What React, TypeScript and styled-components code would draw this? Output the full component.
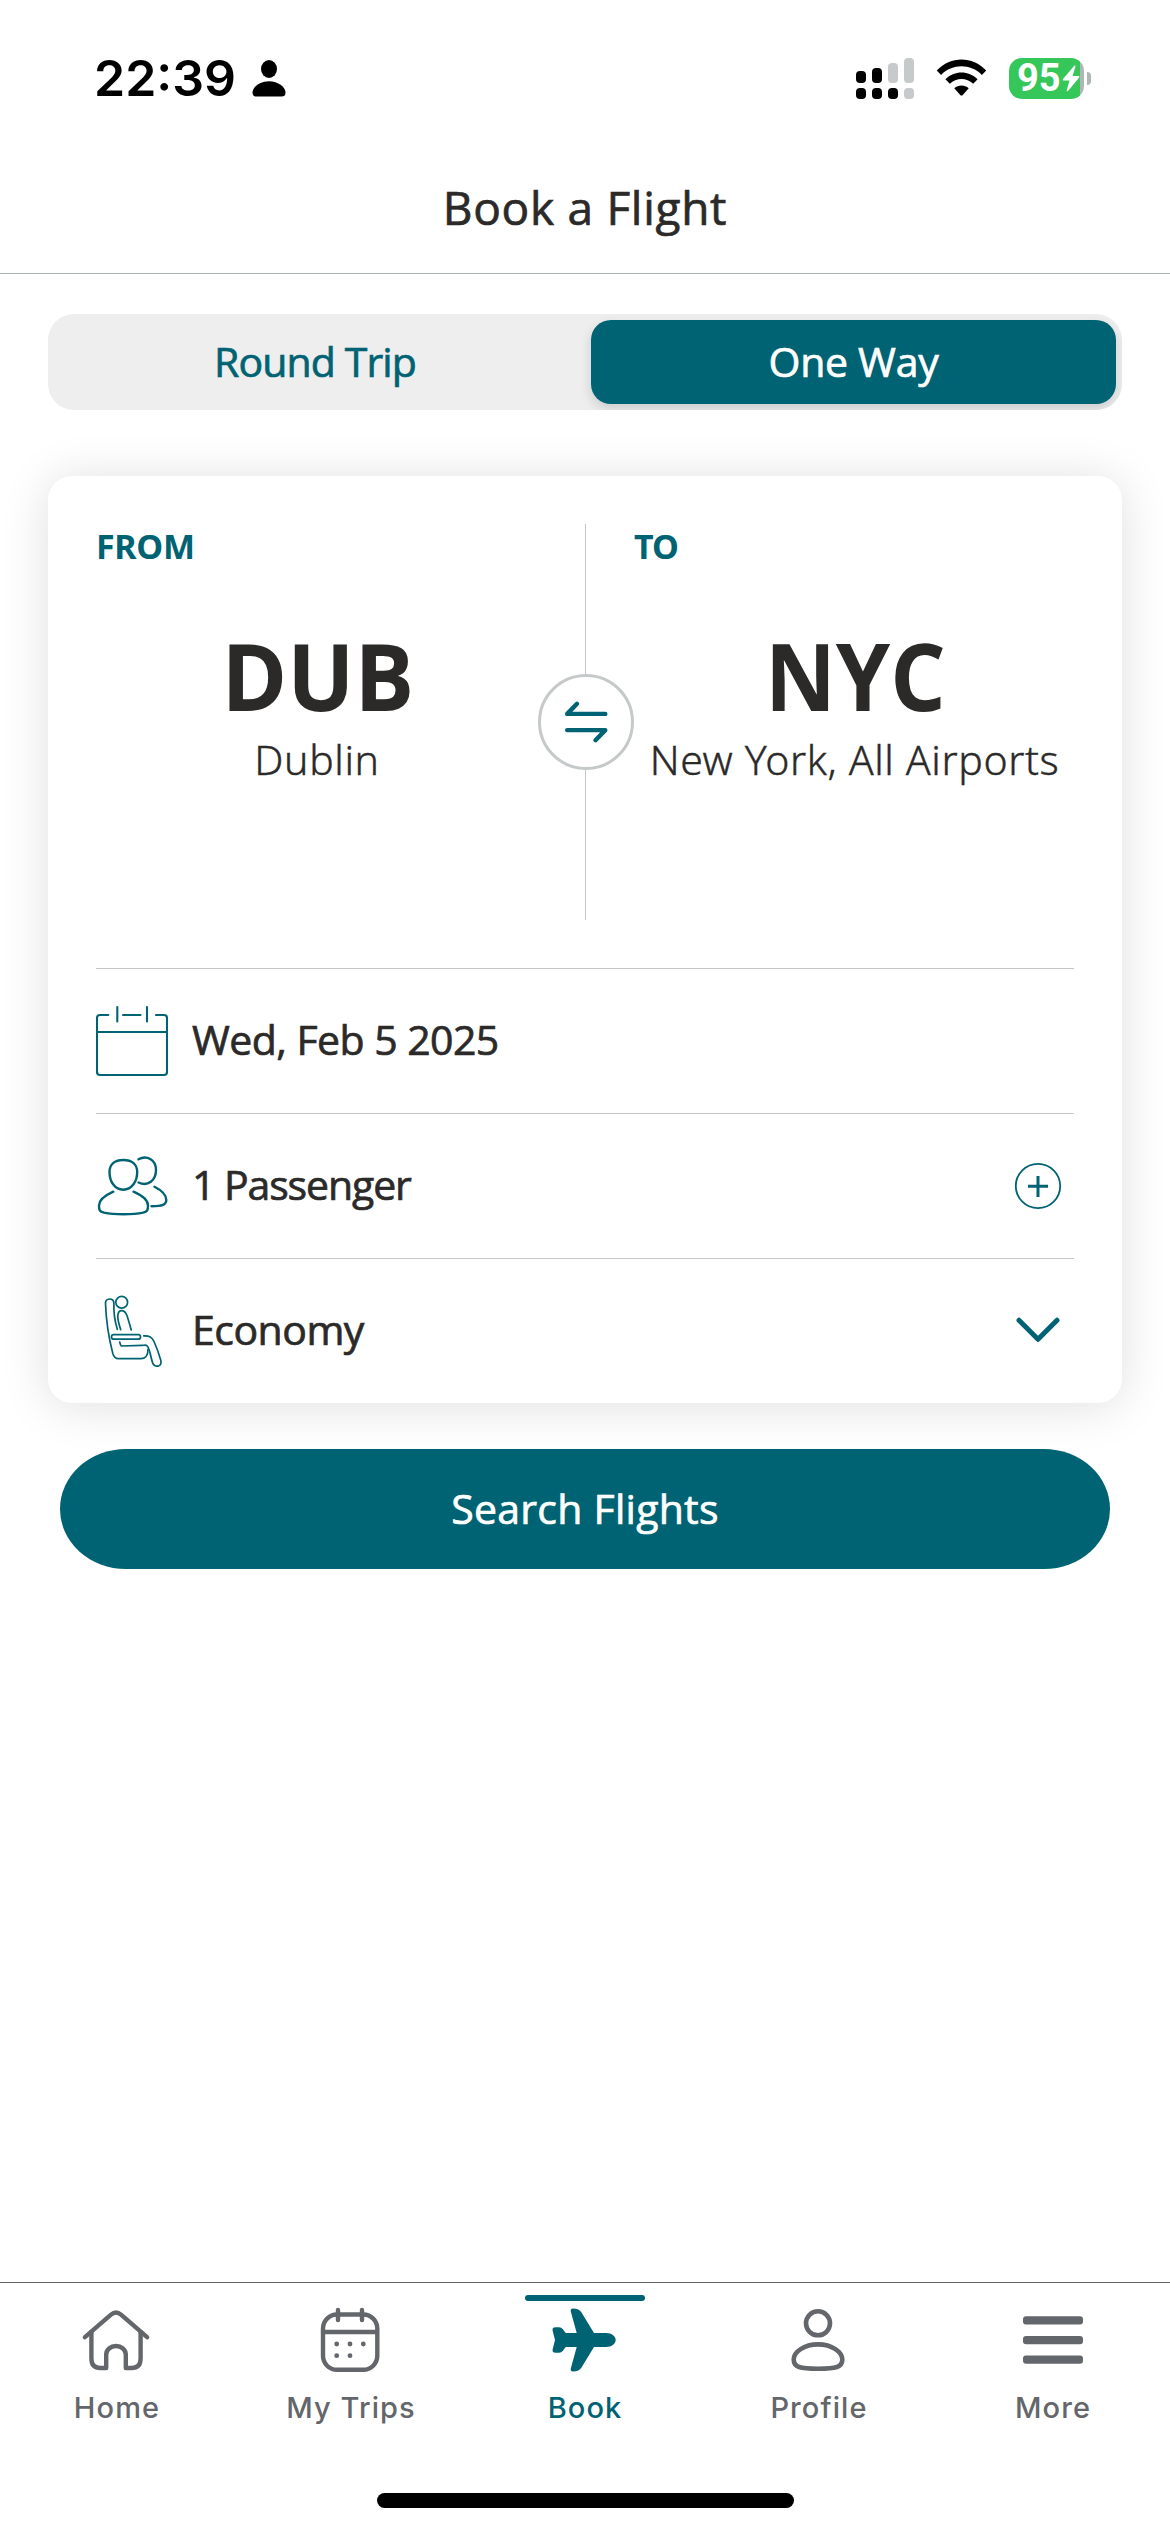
import React from 'react';
import styled, { createGlobalStyle } from 'styled-components';

const teal = '#006373';
const ink = '#2b2a29';
const grey = '#63666a';
const hairline = '#c4c7c8';

const GlobalStyle = createGlobalStyle`
  *, *::before, *::after { box-sizing: border-box; }
  body { margin: 0; background: #fff; }
  button { font: inherit; color: inherit; border: 0; background: none; padding: 0; margin: 0; }
`;

const Screen = styled.div`
  display: flex;
  flex-direction: column;
  width: 1170px;
  height: 2532px;
  background: #fff;
  color: ${ink};
  font-family: 'Open Sans', 'Noto Sans', sans-serif;
  font-weight: 500;
  white-space: nowrap;
  overflow: hidden;
`;

/* Status bar */
const StatusBar = styled.header`
  display: flex;
  justify-content: space-between;
  height: 141px;
  padding: 48px 79px 0 94px;
  font-family: Inter, 'Liberation Sans', sans-serif;
  color: #000;
`;

const StatusGroup = styled.div<{ $gap: number }>`
  display: flex;
  align-items: center;
  gap: ${({ $gap }) => $gap}px;
  height: 60px;
`;

const Clock = styled.time`
  font-size: 50px;
  font-weight: 560;
  line-height: 60px;
`;

const Battery = styled.div`
  display: flex;
  align-items: center;
  gap: 3px;
`;

const BatteryBody = styled.div`
  display: flex;
  align-items: center;
  gap: 1px;
  width: 75px;
  height: 41px;
  padding-left: 8px;
  border-radius: 13px;
  background: linear-gradient(to right, #35c759 71px, #afb6b6 71px);
  color: #fff;
`;

const BatteryLevel = styled.span`
  font-family: Roboto, 'Liberation Sans', sans-serif;
  font-size: 38px;
  font-weight: 700;
  line-height: 41px;
`;

const BatteryTip = styled.div`
  width: 4px;
  height: 13px;
  border-radius: 0 4px 4px 0;
  background: #afb6b6;
`;

/* Header */
const TitleBar = styled.div`
  display: flex;
  align-items: center;
  justify-content: center;
  height: 133px;
  border-bottom: 1px solid #a9b1b2;
`;

const Title = styled.h1`
  margin: 0;
  font-size: 46px;
  font-weight: 500;
  line-height: 60px;
  letter-spacing: 0.7px;
  -webkit-text-stroke: 0.7px currentColor;
`;

const Content = styled.main`
  flex: 1;
  display: flex;
  flex-direction: column;
  padding: 40px 48px 0;
`;

/* Trip type */
const Segmented = styled.div`
  display: grid;
  grid-template-columns: 537px 525px;
  gap: 6px;
  height: 96px;
  padding: 6px 6px 6px 0;
  border-radius: 26px;
  background: #eeeeee;
  overflow: hidden;
`;

const Segment = styled.button<{ $active?: boolean; $spacing: number }>`
  border-radius: 20px;
  background: ${({ $active }) => ($active ? teal : 'transparent')};
  color: ${({ $active }) => ($active ? '#fff' : teal)};
  box-shadow: ${({ $active }) => ($active ? '0 5px 12px rgba(0, 20, 24, 0.15)' : 'none')};
  font-size: 41px;
  line-height: 80px;
  padding: ${({ $active }) => ($active ? '0 0 2px' : '0 3px 2px 0')};
  letter-spacing: ${({ $spacing }) => $spacing}px;
  -webkit-text-stroke: 0.7px currentColor;
`;

/* Search card */
const Card = styled.section`
  display: flex;
  flex-direction: column;
  height: 927px;
  margin-top: 66px;
  border-radius: 24px;
  background: #fff;
  box-shadow: 0 3px 48px rgba(0, 0, 0, 0.13);
`;

const Route = styled.div`
  display: grid;
  grid-template-columns: 537px 1px 1fr;
  height: 492px;
`;

const Divider = styled.div`
  display: flex;
  align-items: center;
  justify-content: center;
  margin: 48px 0;
  background: ${hairline};
`;

const SwapButton = styled.button`
  flex: none;
  display: flex;
  align-items: center;
  justify-content: center;
  width: 96px;
  height: 96px;
  border: 3px solid #c6c9ca;
  border-radius: 50%;
  background: #fff;
`;

const Place = styled.div`
  display: flex;
  flex-direction: column;
  align-items: center;
  padding-top: 50px;
`;

const PlaceLabel = styled.span<{ $spacing: number }>`
  align-self: flex-start;
  padding-left: 48px;
  color: ${teal};
  font-family: 'Noto Sans', sans-serif;
  font-size: 34px;
  font-weight: 700;
  line-height: 41px;
  letter-spacing: ${({ $spacing }) => $spacing}px;
`;

const PlaceCode = styled.strong<{ $stretch: number }>`
  margin-top: 58px;
  padding-left: 2px;
  font-size: 94px;
  font-weight: 700;
  line-height: 100px;
  transform: scaleX(${({ $stretch }) => $stretch});
`;

const PlaceName = styled.span`
  margin-top: 9px;
  padding-left: 1px;
  font-family: 'Noto Sans', sans-serif;
  font-size: 41px;
  font-weight: 300;
  line-height: 50px;
  letter-spacing: 0.6px;
  -webkit-text-stroke: 0.4px currentColor;
`;

const Row = styled.div`
  display: flex;
  align-items: center;
  gap: 24px;
  height: 145px;
  margin: 0 48px;
  padding-right: 12px;
  border-top: 1px solid ${hairline};
`;

const RowText = styled.span<{ $spacing: number }>`
  flex: 1;
  padding-bottom: 4px;
  font-size: 41px;
  line-height: 50px;
  letter-spacing: ${({ $spacing }) => $spacing}px;
  -webkit-text-stroke: 0.7px currentColor;
`;

const SearchButton = styled.button`
  height: 120px;
  margin: 46px 12px 0;
  padding-bottom: 2px;
  border-radius: 66px / 60px;
  background: ${teal};
  color: #fff;
  font-size: 41px;
  letter-spacing: 0.25px;
  -webkit-text-stroke: 0.7px currentColor;
`;

/* Tab bar */
const TabBar = styled.footer`
  display: flex;
  flex-direction: column;
  align-items: center;
  height: 250px;
  border-top: 1px solid ${grey};
`;

const Tabs = styled.nav`
  display: grid;
  grid-template-columns: repeat(5, 234px);
`;

const Tab = styled.button<{ $active?: boolean }>`
  display: flex;
  flex-direction: column;
  align-items: center;
  padding-top: 12px;
  color: ${({ $active }) => ($active ? teal : grey)};
`;

const TabMarker = styled.div<{ $active?: boolean }>`
  width: 120px;
  height: 6px;
  margin-bottom: 3px;
  border-radius: 3px;
  background: ${({ $active }) => ($active ? teal : 'transparent')};
`;

const TabLabel = styled.span`
  margin-top: 12px;
  font-family: Inter, 'Liberation Sans', sans-serif;
  font-size: 29px;
  font-weight: 500;
  line-height: 40px;
  letter-spacing: 1.1px;
`;

const HomeIndicator = styled.div`
  width: 417px;
  height: 15px;
  margin-top: 65px;
  border-radius: 8px;
  background: #000;
`;

const Stroke = styled.svg<{ $width: number; $size?: number }>`
  flex: none;
  width: ${({ $size = 72 }) => $size}px;
  height: ${({ $size = 72 }) => $size}px;
  fill: none;
  stroke: currentColor;
  stroke-width: ${({ $width }) => $width};
  stroke-linecap: round;
  stroke-linejoin: round;
`;

const TealStroke = styled(Stroke)`
  color: ${teal};
`;

const PersonGlyph = () => (
  <svg width="34" height="37" viewBox="0 0 34 37">
    <ellipse cx="17" cy="9" rx="8" ry="9" />
    <path d="M17 21.2C26 21.2 33.5 27 33.5 32.5C33.5 35.5 32 36.5 29.5 36.5H4.5C2 36.5 .5 35.5 .5 32.5C.5 27 8 21.2 17 21.2Z" />
  </svg>
);

const SignalGlyph = () => {
  const tops = [13, 10, 5, 0];
  return (
    <svg width="58" height="41" viewBox="0 0 58 41">
      {tops.map((top, i) => (
        <g key={top}>
          <rect x={i * 16} y={top} width="10" height={25 - top} rx="4" fill={i < 2 ? '#000' : '#c6cacb'} />
          <rect x={i * 16} y="30" width="10" height="11" rx="4" fill={i < 3 ? '#000' : '#c6cacb'} />
        </g>
      ))}
    </svg>
  );
};

const WifiGlyph = () => (
  <svg width="51" height="38" viewBox="0 0 51 38">
    <path d="M.8 11.5C14.5 -3.2 36.5 -3.2 50.2 11.5L45.9 15.9C34.5 4.5 16.5 4.5 5.1 15.9Z" />
    <path d="M9.4 20.3C18.4 11.2 32.6 11.2 41.6 20.3L37.2 24.8C30.7 18.4 20.3 18.4 13.8 24.8Z" />
    <path d="M18.3 29.2C22.3 25.6 28.7 25.6 32.7 29.2L27 35.7Q25.5 37.5 24 35.7Z" />
  </svg>
);

const BoltGlyph = () => (
  <svg width="18" height="27" viewBox="0 0 18 27" fill="#fff">
    <path d="M12.500 .5L.8 14.3Q.2 15.6 1.5 15.6H7.500L4.700 25.300Q4.800 26.800 6 26L17.200 12.400Q17.900 11 16.500 11H10.500L13.500 1.500Q13.600 .2 12.500 .5Z" />
  </svg>
);

const SwapIcon = () => (
  <TealStroke $width={4.4} $size={48} viewBox="0 0 48 48">
    <path d="M43.3 15.9H5.2L15 5.8" />
    <path d="M5.2 32.1H43.3L33.5 42.2" />
  </TealStroke>
);

const CalendarIcon = () => (
  <TealStroke $width={2.1} viewBox="0 0 72 72">
    <path d="M12.3 10H4Q1 10 1 13V67Q1 70 4 70H68Q71 70 71 67V13Q71 10 68 10H60" />
    <path d="M1 27H71M27 10H44.5M21.3 2V16.5M51 2V16.5" />
  </TealStroke>
);

const PassengersIcon = () => (
  <TealStroke $width={2.4} viewBox="0 0 72 72">
    <path d="M27.3 10C36 10 41.2 14.5 41.2 22C41.2 32 35.5 39.7 27.3 39.7C19 39.7 13.5 32 13.5 22C13.5 14.5 18.7 10 27.3 10Z" />
    <path d="M17.3 41.7C10 45 3 50 3 55.5C3 60.5 3.6 61.5 8 62.7C14 64 20 64.3 27.5 64.3C35 64.3 41 64 47 62.7C51.3 61.5 52 60.5 52 55.5C52 50 45 45 37.5 41.7" />
    <path d="M42.5 9.3C50.5 4.8 60 9.5 60 20C60 30.5 52 36.8 42.5 32.5" />
    <path d="M58.5 36.7C66 40.5 70.3 44 70.3 50C70.3 55.5 65 55.8 55.5 56.3" />
  </TealStroke>
);

const SeatIcon = () => (
  <TealStroke $width={1.7} viewBox="0 0 72 72">
    <circle cx="25.7" cy="7.3" r="5.9" />
    <path d="M21.3 34.3C18.8 26 17.5 19 17.9 8.5C17.9 5.5 16.3 4 13.5 4C10.7 4 9.3 6 9.5 8.5C10 22 12.5 42 16.8 58.5C17.9 62.3 19.5 63.7 22.5 63.7H45C49 63.7 52 60.5 52 54.5" />
    <path d="M24.7 34.7C22.5 28 21.5 24 21.8 20.5C22.1 17 23.5 15.5 26 15.7C29 15.9 30.5 19 31.3 21.5C32.5 25.5 34 30 35.2 35" />
    <rect x="15.5" y="39.6" width="29" height="4.6" rx="2.3" />
    <path d="M47.7 40.9C53.5 40.7 56 42 58 46.5C60.5 52 62.7 58 64.7 65C65.7 69 64 71.2 61.3 71.2C58.5 71.2 57.3 70 56.5 67.5C54.5 61.5 54 54.5 51.3 51C50 49.7 48.5 50.3 46 50.4L25.3 51Q24.5 50.5 23.7 47" />
  </TealStroke>
);

const PlusIcon = () => (
  <TealStroke $width={1.8} $size={48} viewBox="0 0 48 48">
    <circle cx="24" cy="24" r="22.2" />
    <path d="M24 14V35M14 24.3H34" strokeWidth="3" strokeLinecap="butt" />
  </TealStroke>
);

const ChevronIcon = () => (
  <TealStroke $width={5} $size={48} viewBox="0 0 48 48">
    <path d="M5 13.2L24 32.3L43 13.2" />
  </TealStroke>
);

const HomeIcon = () => (
  <Stroke $width={4.4} viewBox="0 0 72 72">
    <path d="M3.9 33.2L30 10.7Q35 6.3 40 10.7L66.1 33.2" />
    <path d="M10.4 28V54.5Q10.4 64 19.5 64H25.2V50.5A9.8 8.5 0 0 1 44.8 50.5V64H50.5Q59.6 64 59.6 54.5V28" />
  </Stroke>
);

const TripsIcon = () => (
  <Stroke $width={4.4} viewBox="0 0 72 72">
    <rect x="8" y="10.5" width="54.3" height="55.3" rx="14" />
    <path d="M8 28H62M23 6V16M47 6V16" />
    <g fill="currentColor" stroke="none">
      <circle cx="21.7" cy="40" r="2.4" />
      <circle cx="35" cy="40" r="2.4" />
      <circle cx="48.3" cy="40" r="2.4" />
      <circle cx="21.7" cy="51.7" r="2.4" />
      <circle cx="35" cy="51.7" r="2.4" />
    </g>
  </Stroke>
);

const PlaneIcon = () => (
  <Stroke $width={0} viewBox="0 0 72 72">
    <path
      fill="currentColor"
      d="M57 29H45L32.5 8.500Q30.200 4.600 24 4.600Q21.200 4.600 21.800 7.500L27.700 29H16.700L13.700 25Q12.500 23.300 10 23.300H6.500Q3 23.300 3.600 26.500L6 36L3.600 45.500Q3 48.700 6.500 48.700H10Q12.500 48.700 13.700 47L16.700 43H27.700L21.800 64.500Q21.200 67.400 24 67.400Q30.200 67.400 32.500 63.500L45 43H57C63 43 66.700 39.500 66.700 36C66.700 32.500 63 29 57 29Z"
    />
  </Stroke>
);

const ProfileIcon = () => (
  <Stroke $width={4.6} viewBox="0 0 72 72">
    <circle cx="35" cy="19.3" r="12" />
    <path d="M35 40.4C49 40.4 59.3 48 59.3 55.5C59.3 63.3 53 64.7 35 64.7C17 64.7 10.7 63.3 10.7 55.5C10.7 48 21 40.4 35 40.4Z" />
  </Stroke>
);

const MoreIcon = () => (
  <Stroke $width={0} viewBox="0 0 72 72">
    <g fill="currentColor">
      <rect x="6" y="12.2" width="60" height="8.3" rx="3" />
      <rect x="6" y="31.9" width="60" height="8.3" rx="3" />
      <rect x="6" y="51.4" width="60" height="8.3" rx="3" />
    </g>
  </Stroke>
);

const tabs = [
  { label: 'Home', Icon: HomeIcon },
  { label: 'My Trips', Icon: TripsIcon },
  { label: 'Book', Icon: PlaneIcon, active: true },
  { label: 'Profile', Icon: ProfileIcon },
  { label: 'More', Icon: MoreIcon },
];

export default function App() {
  return (
    <Screen>
      <GlobalStyle />
      <StatusBar>
        <StatusGroup $gap={16}>
          <Clock>22:39</Clock>
          <PersonGlyph />
        </StatusGroup>
        <StatusGroup $gap={22}>
          <SignalGlyph />
          <WifiGlyph />
          <Battery>
            <BatteryBody>
              <BatteryLevel>95</BatteryLevel>
              <BoltGlyph />
            </BatteryBody>
            <BatteryTip />
          </Battery>
        </StatusGroup>
      </StatusBar>

      <TitleBar>
        <Title>Book a Flight</Title>
      </TitleBar>

      <Content>
        <Segmented>
          <Segment $spacing={-0.9}>Round Trip</Segment>
          <Segment $active $spacing={-0.3}>One Way</Segment>
        </Segmented>

        <Card>
          <Route>
            <Place>
              <PlaceLabel $spacing={-0.3}>FROM</PlaceLabel>
              <PlaceCode $stretch={0.945}>DUB</PlaceCode>
              <PlaceName>Dublin</PlaceName>
            </Place>
            <Divider>
              <SwapButton aria-label="Swap">
                <SwapIcon />
              </SwapButton>
            </Divider>
            <Place>
              <PlaceLabel $spacing={-1}>TO</PlaceLabel>
              <PlaceCode $stretch={0.928}>NYC</PlaceCode>
              <PlaceName>New York, All Airports</PlaceName>
            </Place>
          </Route>
          <Row>
            <CalendarIcon />
            <RowText $spacing={-0.55}>Wed, Feb 5 2025</RowText>
          </Row>
          <Row>
            <PassengersIcon />
            <RowText $spacing={-1.1}>1 Passenger</RowText>
            <PlusIcon />
          </Row>
          <Row>
            <SeatIcon />
            <RowText $spacing={-0.5}>Economy</RowText>
            <ChevronIcon />
          </Row>
        </Card>

        <SearchButton>Search Flights</SearchButton>
      </Content>

      <TabBar>
        <Tabs>
          {tabs.map(({ label, Icon, active }) => (
            <Tab key={label} $active={active}>
              <TabMarker $active={active} />
              <Icon />
              <TabLabel>{label}</TabLabel>
            </Tab>
          ))}
        </Tabs>
        <HomeIndicator />
      </TabBar>
    </Screen>
  );
}
